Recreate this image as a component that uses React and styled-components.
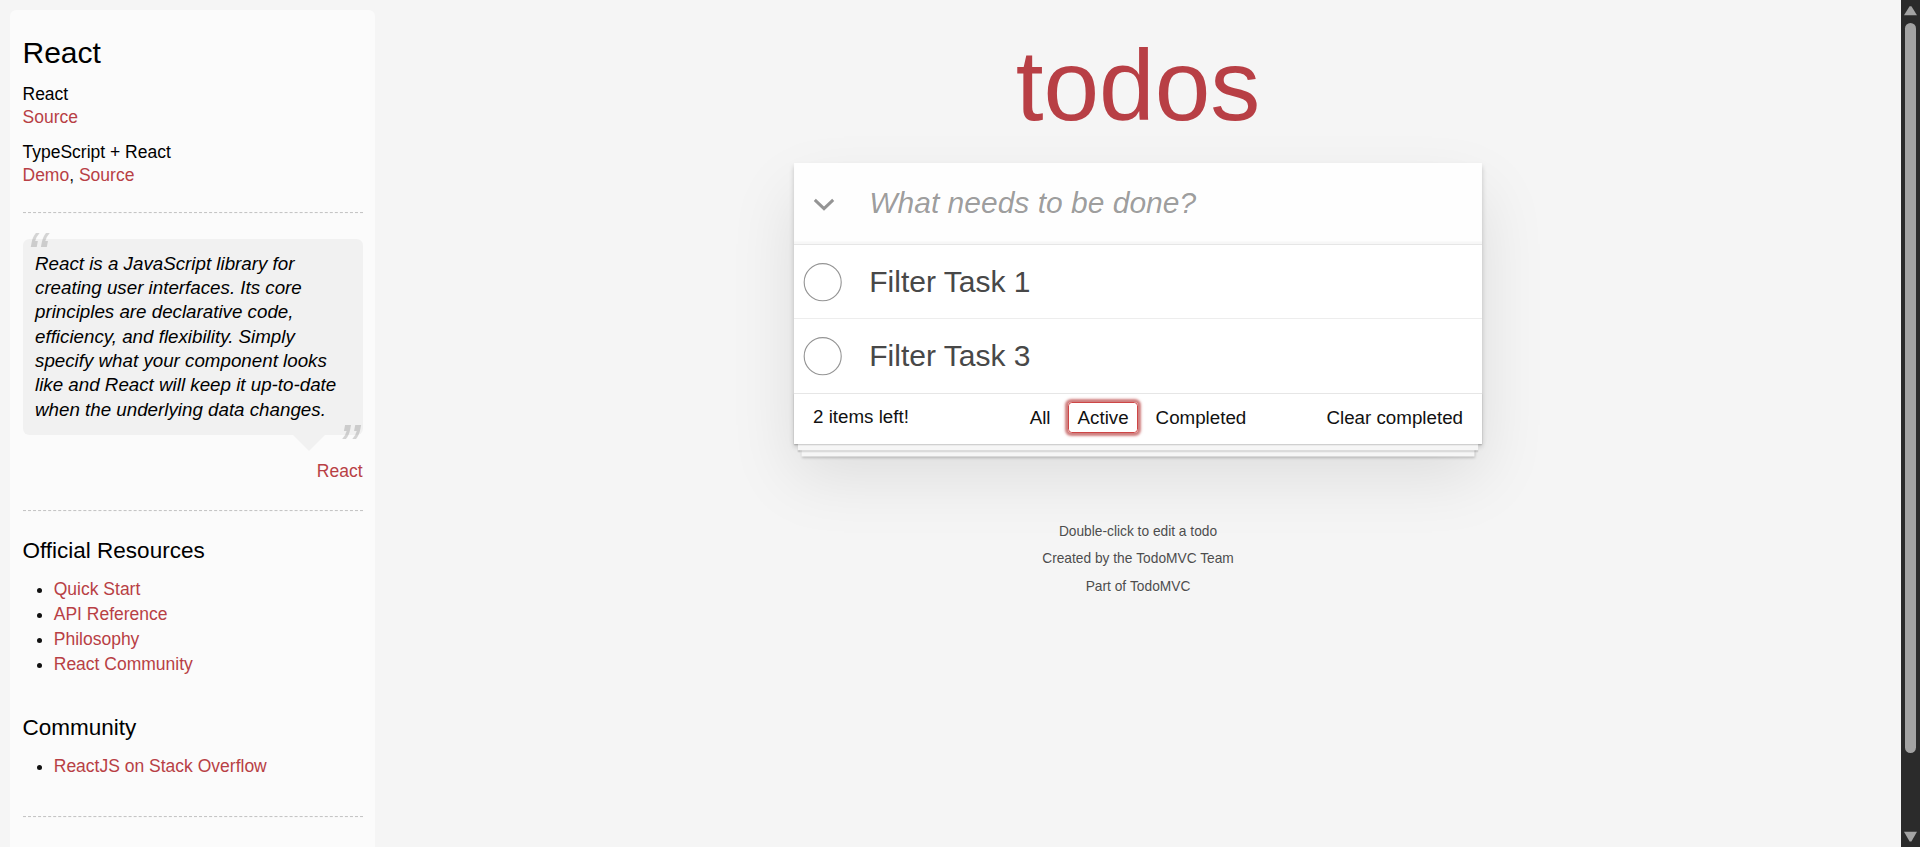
import styled, { createGlobalStyle } from "styled-components";

const GlobalStyle = createGlobalStyle`
  * {
    box-sizing: border-box;
  }

  html,
  body {
    margin: 0;
    padding: 0;
    height: 100%;
    overflow: hidden;
  }

  body {
    background: #f5f5f5;
    color: #111111;
    font-family: "Liberation Sans", Arial, Helvetica, sans-serif;
    font-size: 17.5px;
    line-height: 24.5px;
    font-weight: 300;
    -webkit-font-smoothing: antialiased;
  }
`;

const resources = ["Quick Start", "API Reference", "Philosophy", "React Community"];
const community = ["ReactJS on Stack Overflow"];
const todos = [
  { id: 1, title: "Filter Task 1" },
  { id: 3, title: "Filter Task 3" },
];
const filters = ["All", "Active", "Completed"];

export default function App() {
  return (
    <>
      <GlobalStyle />
      <Window>
        <Page>
          <Learn>
            <LearnTitle>React</LearnTitle>
            <SourceLinks>
              <SubTitle>React</SubTitle>
              <Link href="#">Source</Link>
              <br />
              <SubTitle>TypeScript + React</SubTitle>
              <Link href="#">Demo</Link>, <Link href="#">Source</Link>
            </SourceLinks>
            <Rule />
            <Quote>
              <Bubble>
                <QuoteText>
                  React is a JavaScript library for creating user interfaces. Its core
                  principles are declarative code, efficiency, and flexibility. Simply
                  specify what your component looks like and React will keep it
                  up-to-date when the underlying data changes.
                </QuoteText>
              </Bubble>
              <QuoteFooter>
                <Link href="#">React</Link>
              </QuoteFooter>
            </Quote>
            <Rule />
            <SectionTitle>Official Resources</SectionTitle>
            <LinkList>
              {resources.map((r) => (
                <li key={r}>
                  <Link href="#">{r}</Link>
                </li>
              ))}
            </LinkList>
            <SectionTitle>Community</SectionTitle>
            <LinkList>
              {community.map((r) => (
                <li key={r}>
                  <Link href="#">{r}</Link>
                </li>
              ))}
            </LinkList>
            <Rule />
          </Learn>

          <Main>
            <Title>todos</Title>
            <TodoApp>
              <Header>
                <ToggleAll>
                  <svg width="22" height="13" viewBox="0 0 22 13">
                    <polyline
                      points="1.8,1.8 11,10.6 20.2,1.8"
                      fill="none"
                      stroke="#949494"
                      strokeWidth="3"
                    />
                  </svg>
                </ToggleAll>
                <NewTodo placeholder="What needs to be done?" />
              </Header>
              <TodoList>
                {todos.map((t) => (
                  <TodoItem key={t.id}>
                    <Toggle width="50" height="50" viewBox="-10 -18 100 135">
                      <circle cx="50" cy="50" r="50" fill="none" stroke="#949494" strokeWidth="3" />
                    </Toggle>
                    <TodoLabel>{t.title}</TodoLabel>
                  </TodoItem>
                ))}
              </TodoList>
              <Footer>
                <Count>2 items left!</Count>
                <Filters>
                  {filters.map((f) => (
                    <li key={f}>
                      <FilterLink href="#" $selected={f === "Active"}>
                        {f}
                      </FilterLink>
                    </li>
                  ))}
                </Filters>
                <ClearButton>Clear completed</ClearButton>
              </Footer>
            </TodoApp>
            <Info>
              <p>Double-click to edit a todo</p>
              <p>
                Created by the <a href="#">TodoMVC Team</a>
              </p>
              <p>
                Part of <a href="#">TodoMVC</a>
              </p>
            </Info>
          </Main>
        </Page>

        <ScrollBar>
          <ScrollButton>
            <svg width="19" height="19" viewBox="0 0 19 19">
              <polygon points="3,15.3 8.6,6.2 10.4,6.2 16,15.3" fill="#a3a3a3" />
            </svg>
          </ScrollButton>
          <ScrollTrack>
            <ScrollThumb />
          </ScrollTrack>
          <ScrollButton>
            <svg width="19" height="19" viewBox="0 0 19 19">
              <polygon points="3,3.7 16,3.7 10.4,13.4 8.6,13.4" fill="#a3a3a3" />
            </svg>
          </ScrollButton>
        </ScrollBar>
      </Window>
    </>
  );
}

const Window = styled.div`
  display: flex;
  height: 100vh;
`;

const Page = styled.div`
  flex: 1;
  min-width: 0;
  display: flex;
  align-items: flex-start;
  overflow: hidden;
`;

/* learn sidebar */
const Learn = styled.aside`
  flex: 0 0 365px;
  margin: 10px 0 0 10px;
  padding: 12.5px 12.5px 60px;
  border-radius: 6.25px;
  background: rgba(255, 255, 255, 0.6);
`;

const LearnTitle = styled.h3`
  margin: 12.5px 0;
  font-size: 30px;
  font-weight: 500;
  line-height: 1.2;
  color: #000;
`;

const SourceLinks = styled.div``;

const SubTitle = styled.h5`
  margin: 12.5px 0 0;
  font-size: 17.5px;
  font-weight: 500;
  line-height: 1.2;
  color: #000;
`;

const SectionTitle = styled.h4`
  margin: 12.5px 0;
  font-size: 22.5px;
  font-weight: 500;
  line-height: 1.2;
  color: #000;
`;

const Link = styled.a`
  color: #b83f45;
  font-weight: normal;
  text-decoration: none;
`;

const Rule = styled.hr`
  margin: 25px 0;
  border: 0;
  border-top: 1px dashed #c5c5c5;
  border-bottom: 1px dashed #f7f7f7;
`;

const Quote = styled.blockquote`
  margin: 25px 0 27px;
  padding: 0;
`;

const Bubble = styled.div`
  position: relative;
  padding: 12.5px;
  background: rgba(0, 0, 0, 0.04);
  border-radius: 6.25px;

  &::after {
    content: "";
    position: absolute;
    top: 100%;
    right: 37.5px;
    border: 16.25px solid transparent;
    border-top-color: rgba(0, 0, 0, 0.04);
  }
`;

const QuoteText = styled.p`
  margin: 0;
  font-size: 18.75px;
  font-style: italic;
  font-weight: 300;
  line-height: 1.3;
  color: #000;

  &::before {
    content: "“";
    position: absolute;
    top: -25px;
    left: 3.75px;
    font-size: 62.5px;
    opacity: 0.15;
  }

  &::after {
    content: "”";
    position: absolute;
    bottom: -52.5px;
    right: 3.75px;
    font-size: 62.5px;
    opacity: 0.15;
  }
`;

const QuoteFooter = styled.footer`
  margin-top: 24px;
  text-align: right;
`;

const LinkList = styled.ul`
  margin: 0 0 37.5px 31.25px;
  padding: 0;

  li {
    line-height: 25px;
  }
`;

/* todo app */
const Main = styled.main`
  flex: 1;
  display: flex;
  flex-direction: column;
  align-items: center;
  padding-top: 14.5px;
`;

const Title = styled.h1`
  width: 687.5px;
  margin: 0 0 8px;
  font-size: 100px;
  line-height: 140px;
  font-weight: 200;
  text-align: center;
  color: #b83f45;
  text-rendering: optimizeLegibility;
`;

const TodoApp = styled.section`
  width: 687.5px;
  background: #fff;
  box-shadow: 0 2.5px 5px 0 rgba(0, 0, 0, 0.2), 0 31.25px 62.5px 0 rgba(0, 0, 0, 0.1);
`;

const Header = styled.header`
  display: flex;
  align-items: center;
  height: 81.25px;
  background: rgba(0, 0, 0, 0.003);
  box-shadow: inset 0 -2.5px 1.25px rgba(0, 0, 0, 0.03);
`;

const ToggleAll = styled.span`
  flex: 0 0 60px;
  display: flex;
  justify-content: center;
  padding-top: 2px;
`;

const NewTodo = styled.input`
  flex: 1;
  min-width: 0;
  height: 100%;
  padding: 0 20px 0 15px;
  border: 0;
  outline: none;
  background: transparent;
  font-family: inherit;
  font-size: 30px;
  line-height: 42px;
  color: #484848;

  &::placeholder {
    font-style: italic;
    font-weight: 400;
    color: rgba(0, 0, 0, 0.4);
  }
`;

const TodoList = styled.ul`
  margin: 0;
  padding: 0;
  list-style: none;
  border-top: 1px solid #e6e6e6;
`;

const TodoItem = styled.li`
  display: flex;
  align-items: center;
  border-bottom: 1px solid #ededed;

  &:last-child {
    border-bottom: none;
  }
`;

const Toggle = styled.svg`
  flex-shrink: 0;
`;

const TodoLabel = styled.label`
  flex: 1;
  padding: 18.75px 18.75px 18.75px 25px;
  font-size: 30px;
  font-weight: 400;
  line-height: 1.2;
  color: #484848;
`;

const Footer = styled.footer`
  display: grid;
  grid-template-columns: 1fr auto 1fr;
  align-items: center;
  height: 51.25px;
  padding: 0 18.75px 3px;
  border-top: 1px solid #e6e6e6;
  font-size: 18.75px;
  box-shadow: 0 1.25px 1.25px rgba(0, 0, 0, 0.2), 0 10px 0 -3.75px #f6f6f6,
    0 11.25px 1.25px -3.75px rgba(0, 0, 0, 0.2), 0 20px 0 -7.5px #f6f6f6,
    0 21.25px 2.5px -7.5px rgba(0, 0, 0, 0.2);
`;

const Count = styled.span`
  justify-self: start;
`;

const Filters = styled.ul`
  display: flex;
  margin: 0;
  padding: 0;
  list-style: none;
`;

const FilterLink = styled.a`
  display: block;
  margin: 3.75px;
  padding: 3.75px 8.75px;
  border: 1px solid ${(p) => (p.$selected ? "#ce4646" : "transparent")};
  border-radius: 3.75px;
  line-height: 21px;
  color: inherit;
  text-decoration: none;
  box-shadow: ${(p) => (p.$selected ? "0 0 2.5px 2.5px #cf7d7d" : "none")};
`;

const ClearButton = styled.button`
  justify-self: end;
  margin: 0;
  padding: 0;
  border: 0;
  background: none;
  font: inherit;
  line-height: 23.75px;
  color: inherit;
  cursor: pointer;
`;

const Info = styled.footer`
  width: 687.5px;
  margin-top: 67px;
  color: #4d4d4d;
  font-size: 13.75px;
  text-align: center;
  text-shadow: 0 1.25px 0 rgba(255, 255, 255, 0.5);

  p {
    margin: 13.75px 0;
    line-height: 1;
  }

  a {
    color: inherit;
    font-weight: 400;
    text-decoration: none;
  }
`;

/* window scrollbar */
const ScrollBar = styled.div`
  flex: 0 0 19px;
  display: flex;
  flex-direction: column;
  background: #2b2b2b;
`;

const ScrollButton = styled.div`
  height: 19px;
  display: flex;
`;

const ScrollTrack = styled.div`
  flex: 1;
  padding: 3.7px 4px 0;
`;

const ScrollThumb = styled.div`
  height: 730px;
  border-radius: 5.5px;
  background: #a3a3a3;
`;
